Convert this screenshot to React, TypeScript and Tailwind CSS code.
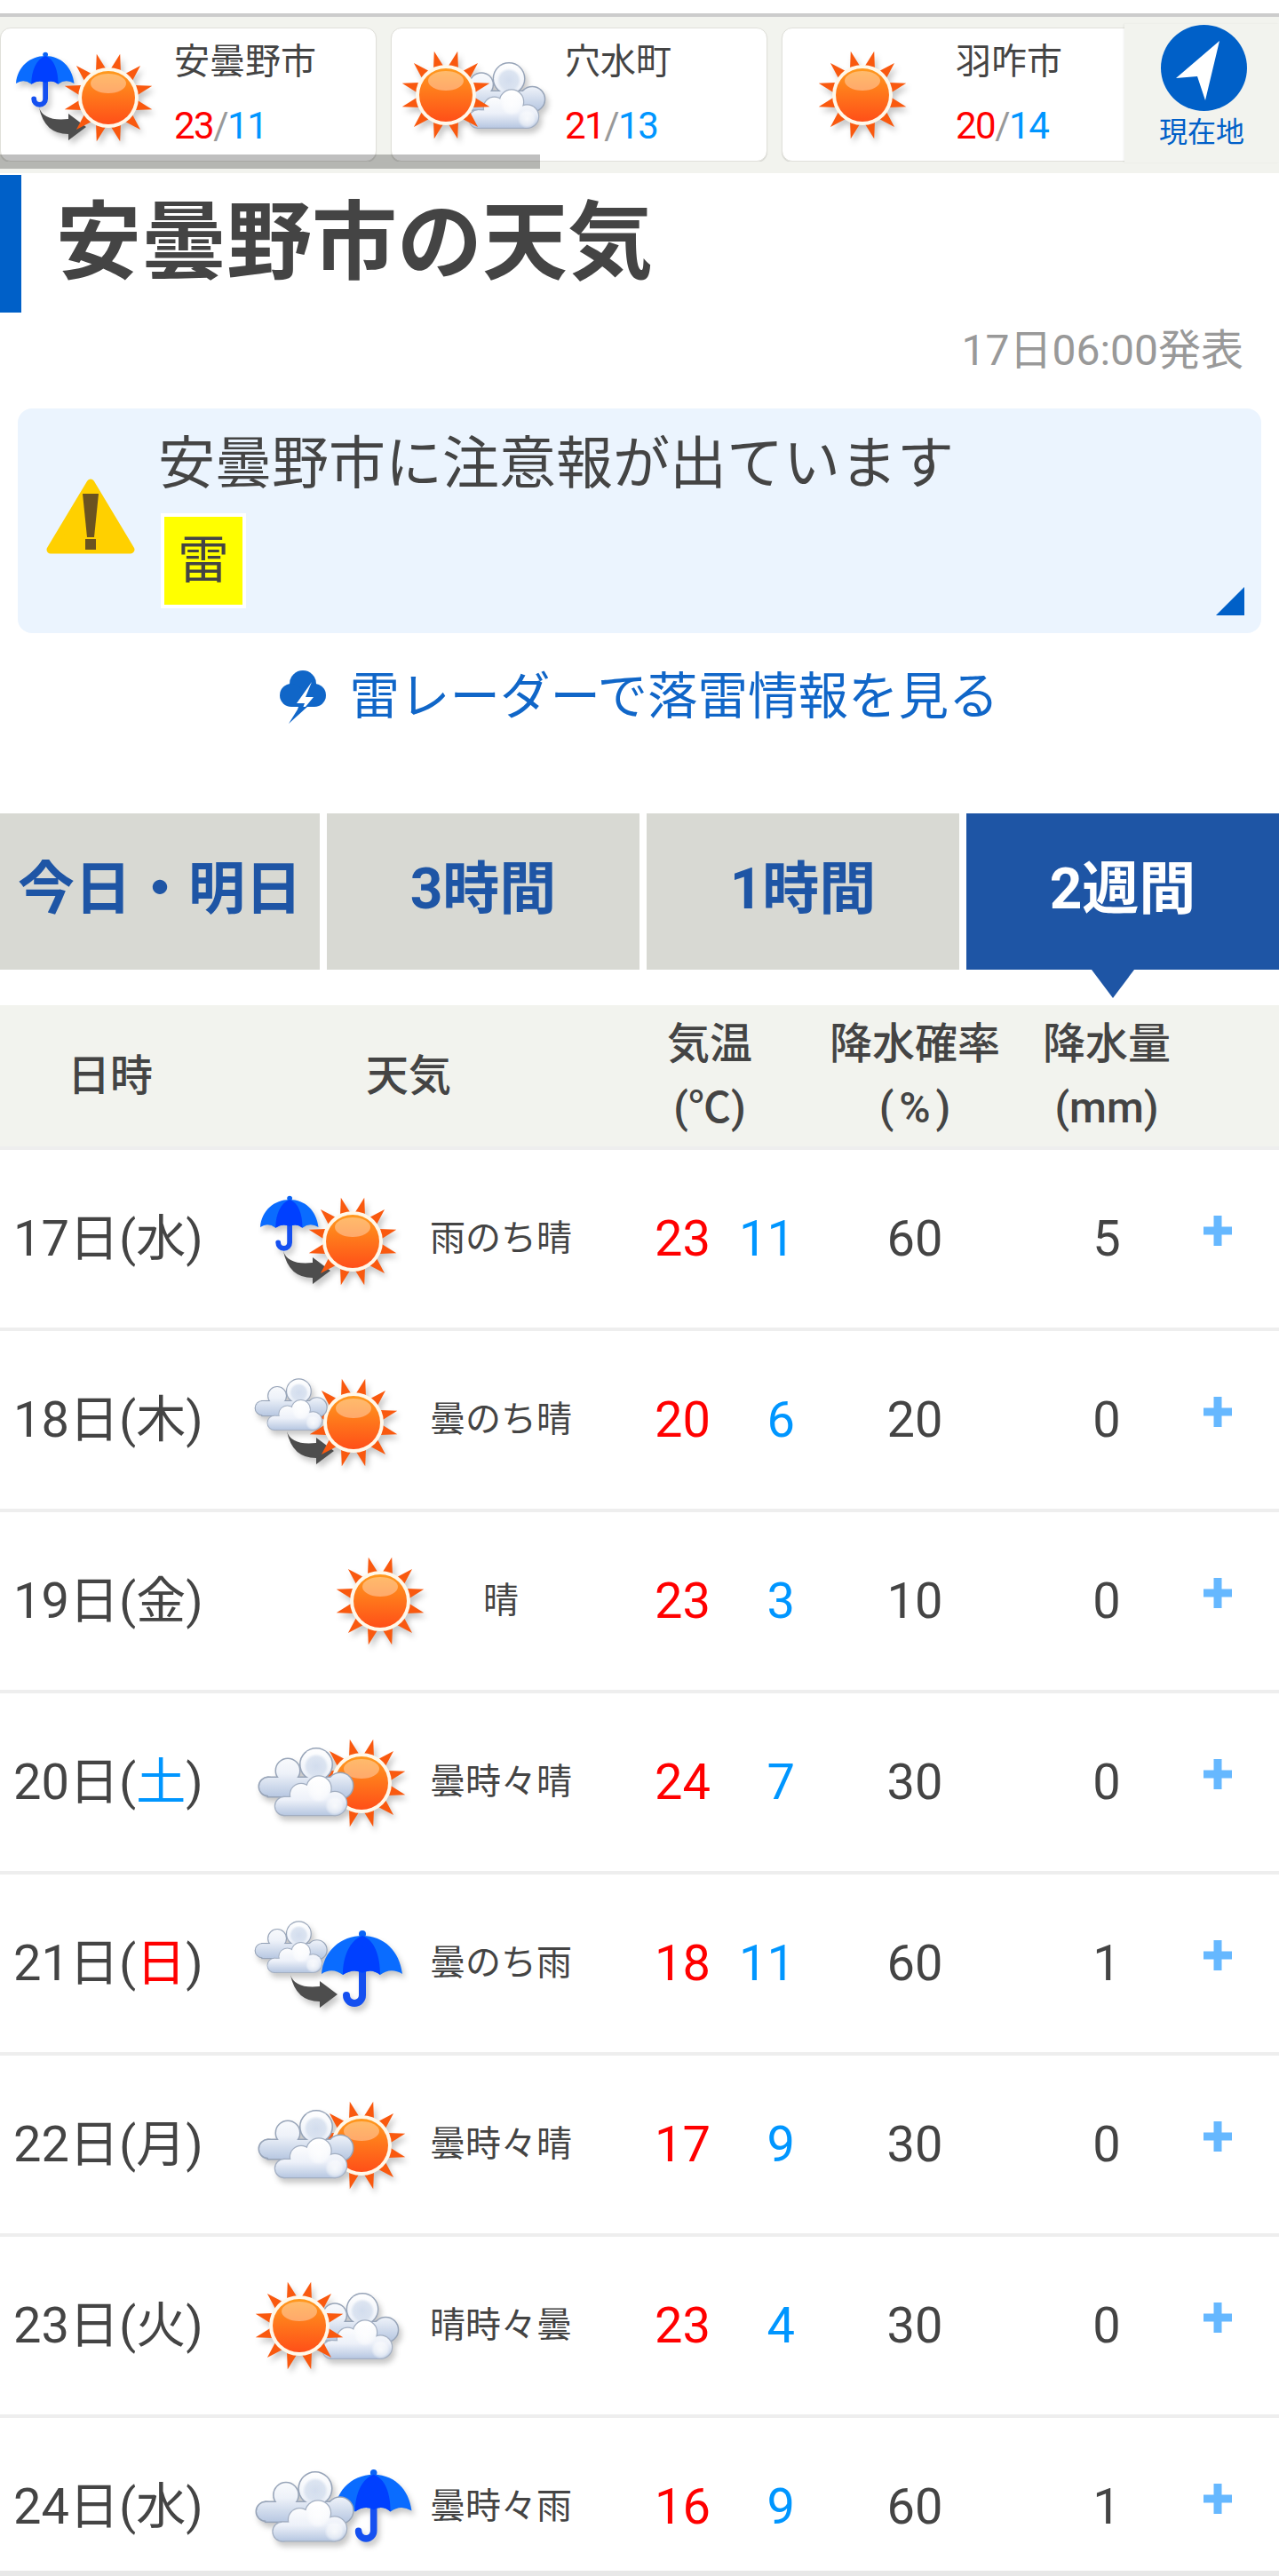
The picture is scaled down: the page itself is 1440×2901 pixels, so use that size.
type IconKind = 'rainThenSun' | 'cloudThenSun' | 'sun' | 'cloudSun' | 'cloudThenRain' | 'sunCloud' | 'cloudRain';

type Day = {
  date: string;
  dow: string;
  dowColor?: string;
  icon: IconKind;
  label: string;
  high: number;
  low: number;
  pop: number;
  rain: number;
};

const days: Day[] = [
  { date: '17日', dow: '水', icon: 'rainThenSun', label: '雨のち晴', high: 23, low: 11, pop: 60, rain: 5 },
  { date: '18日', dow: '木', icon: 'cloudThenSun', label: '曇のち晴', high: 20, low: 6, pop: 20, rain: 0 },
  { date: '19日', dow: '金', icon: 'sun', label: '晴', high: 23, low: 3, pop: 10, rain: 0 },
  { date: '20日', dow: '土', dowColor: 'text-[#0096ff]', icon: 'cloudSun', label: '曇時々晴', high: 24, low: 7, pop: 30, rain: 0 },
  { date: '21日', dow: '日', dowColor: 'text-[#ff0000]', icon: 'cloudThenRain', label: '曇のち雨', high: 18, low: 11, pop: 60, rain: 1 },
  { date: '22日', dow: '月', icon: 'cloudSun', label: '曇時々晴', high: 17, low: 9, pop: 30, rain: 0 },
  { date: '23日', dow: '火', icon: 'sunCloud', label: '晴時々曇', high: 23, low: 4, pop: 30, rain: 0 },
  { date: '24日', dow: '水', icon: 'cloudRain', label: '曇時々雨', high: 16, low: 9, pop: 60, rain: 1 },
];

const cards: { name: string; icon: IconKind; high: number; low: number }[] = [
  { name: '安曇野市', icon: 'rainThenSun', high: 23, low: 11 },
  { name: '穴水町', icon: 'sunCloud', high: 21, low: 13 },
  { name: '羽咋市', icon: 'sun', high: 20, low: 14 },
];

// Shared gradients, referenced by every weather icon
function IconDefs() {
  return (
    <svg className="absolute w-0 h-0" aria-hidden="true">
      <defs>
        <linearGradient id="sunCore" x1="0" y1="0" x2="0" y2="1">
          <stop offset="0%" stopColor="#ff9a1e" />
          <stop offset="100%" stopColor="#ff4f18" />
        </linearGradient>
        <linearGradient id="cloudBack" gradientUnits="userSpaceOnUse" x1="0" y1="0" x2="0" y2="56">
          <stop offset="0%" stopColor="#ffffff" />
          <stop offset="50%" stopColor="#eef2f9" />
          <stop offset="100%" stopColor="#b4c5e0" />
        </linearGradient>
        <linearGradient id="cloudFront" gradientUnits="userSpaceOnUse" x1="0" y1="36" x2="0" y2="76">
          <stop offset="0%" stopColor="#ffffff" />
          <stop offset="55%" stopColor="#edf1f9" />
          <stop offset="100%" stopColor="#b4c5e0" />
        </linearGradient>
        <radialGradient id="softGlow">
          <stop offset="0%" stopColor="#ffffff" stopOpacity="0.8" />
          <stop offset="70%" stopColor="#ffffff" stopOpacity="0.5" />
          <stop offset="100%" stopColor="#ffffff" stopOpacity="0" />
        </radialGradient>
        <radialGradient id="softBlue">
          <stop offset="0%" stopColor="#cfdaec" stopOpacity="0.9" />
          <stop offset="75%" stopColor="#d5dfee" stopOpacity="0.8" />
          <stop offset="100%" stopColor="#d5dfee" stopOpacity="0" />
        </radialGradient>
      </defs>
    </svg>
  );
}

function Sun({ x, y }: { x: number; y: number }) {
  const rays = Array.from({ length: 12 }, (_, i) => {
    const a = ((15 + i * 30) * Math.PI) / 180;
    const d = (10 * Math.PI) / 180;
    const pt = (r: number, ang: number) => `${x + r * Math.sin(ang)},${y - r * Math.cos(ang)}`;
    return `${pt(33, a - d)} ${pt(51, a)} ${pt(33, a + d)}`;
  });
  return (
    <g>
      {rays.map((p) => (
        <polygon key={p} points={p} fill="#f9590f" />
      ))}
      <circle cx={x} cy={y} r={34} fill="#fff8ea" />
      <circle cx={x} cy={y} r={30} fill="url(#sunCore)" />
      <ellipse cx={x} cy={y - 16} rx={20} ry={11} fill="#ffffff" opacity={0.35} />
    </g>
  );
}

function BackShapes(props: { fill?: string; stroke?: string; strokeWidth?: number }) {
  return (
    <g {...props}>
      <circle cx={11} cy={43} r={10} />
      <circle cx={33} cy={25} r={13} />
      <circle cx={65} cy={18} r={17.5} />
      <circle cx={92} cy={42} r={14} />
      <rect x={11} y={33} width={82} height={21} />
    </g>
  );
}

function FrontShapes(props: { fill?: string; stroke?: string; strokeWidth?: number }) {
  return (
    <g {...props}>
      <circle cx={29} cy={65} r={10} />
      <circle cx={48} cy={52} r={12} />
      <circle cx={68} cy={45} r={13.5} />
      <circle cx={86} cy={62} r={13} />
      <rect x={29} y={55} width={57} height={20} />
    </g>
  );
}

function Cloud({ x, y, s = 1 }: { x: number; y: number; s?: number }) {
  return (
    <g transform={`translate(${x} ${y}) scale(${s})`}>
      <BackShapes fill="#97a4b8" stroke="#97a4b8" strokeWidth={3} />
      <BackShapes fill="url(#cloudBack)" />
      <circle cx={65} cy={20} r={14} fill="url(#softBlue)" />
      <FrontShapes fill="#a3afc2" stroke="#a3afc2" strokeWidth={2.500} />
      <FrontShapes fill="url(#cloudFront)" />
      <circle cx={68} cy={48} r={13} fill="url(#softGlow)" />
      <circle cx={86} cy={65} r={11} fill="url(#softGlow)" />
    </g>
  );
}

function Umbrella({ x, y, s = 1 }: { x: number; y: number; s?: number }) {
  return (
    <g transform={`translate(${x} ${y}) scale(${s})`}>
      <path d="M46 46 V74 A9 9 0 0 1 28 74" fill="none" stroke="#1550f0" strokeWidth={8} strokeLinecap="round" />
      <circle cx={46} cy={5} r={4} fill="#0a63f5" />
      <path d="M0 50 C2 24 22 7 46 7 C70 7 88 24 91 50 Q78 42 66 51 Q56 43 46 49 Q36 43 24 51 Q12 42 0 50 Z" fill="#0a6cff" />
      <path d="M46 7 C32 12 24 30 24 51 Q36 43 46 49 Q56 43 66 51 C66 30 60 12 46 7 Z" fill="#0040ff" />
    </g>
  );
}

function TurnArrow({ x, y }: { x: number; y: number }) {
  return (
    <path
      transform={`translate(${x} ${y})`}
      d="M0 0 Q5 16 33 13 L33 7 L53 22 L33 37 L33 30 Q6 30 0 0 Z"
      fill="#4d4d4d"
    />
  );
}

function WeatherIcon({ kind, className }: { kind: IconKind; className: string }) {
  return (
    <svg
      viewBox="0 0 160 110"
      className={`overflow-visible shrink-0 drop-shadow-[3px_5px_3px_rgba(0,0,0,0.22)] ${className}`}
    >
      {kind === 'rainThenSun' && (
        <>
          <TurnArrow x={29} y={69} />
          <Sun x={107} y={58} />
          <Umbrella x={3} y={6} s={0.72} />
        </>
      )}
      {kind === 'cloudThenSun' && (
        <>
          <TurnArrow x={33} y={68} />
          <Sun x={108} y={58} />
          <Cloud x={-3} y={9} s={0.76} />
        </>
      )}
      {kind === 'sun' && <Sun x={80} y={55} />}
      {kind === 'cloudSun' && (
        <>
          <Sun x={117} y={56} />
          <Cloud x={1} y={17} />
        </>
      )}
      {kind === 'cloudThenRain' && (
        <>
          <TurnArrow x={37} y={68} />
          <Umbrella x={72} y={17} />
          <Cloud x={-3} y={8} s={0.76} />
        </>
      )}
      {kind === 'sunCloud' && (
        <>
          <Cloud x={55} y={19} s={0.97} />
          <Sun x={47} y={55} />
        </>
      )}
      {kind === 'cloudRain' && (
        <>
          <Umbrella x={87} y={12} s={0.95} />
          <Cloud x={-2} y={16} s={1.03} />
        </>
      )}
    </svg>
  );
}

function LocationCard({ name, icon, high, low }: { name: string; icon: IconKind; high: number; low: number }) {
  return (
    <div className="flex items-center w-[424px] h-[151px] shrink-0 bg-white rounded-xl border border-[#e0e0da] shadow-[0_1px_1px_rgba(0,0,0,0.12)]">
      <WeatherIcon kind={icon} className={icon === 'sun' ? 'w-[160px] h-[110px] ml-[10px]' : 'w-[160px] h-[110px] ml-[14px]'} />
      <div className={icon === 'sun' ? 'ml-[25px] flex flex-col pb-[4px]' : 'ml-[21px] flex flex-col pb-[4px]'}>
        <div className="text-[40px] leading-[73px] text-[#444]">{name}</div>
        <div className="text-[42px] leading-[71px] tracking-[-1.5px] text-[#999]">
          <span className="text-[#ff0000]">{high}</span>/<span className="text-[#0096ff]">{low}</span>
        </div>
      </div>
    </div>
  );
}

function DayRow({ day, last }: { day: Day; last: boolean }) {
  return (
    <div className={last ? 'h-[178px] border-b-[6px] border-[#e8e8e8] overflow-hidden' : 'h-[204px] border-b-4 border-[#eeeeee] overflow-hidden'}>
      <div className="flex items-center h-[200px] text-[56px] text-[#444]">
        <div className="w-[290px] pl-[15px]">
          {day.date}(<span className={day.dowColor}>{day.dow}</span>)
        </div>
        <div className="w-[160px]">
          <WeatherIcon kind={day.icon} className={day.icon === 'sun' ? 'w-[160px] h-[110px] ml-[58px]' : 'w-[160px] h-[110px]'} />
        </div>
        <div className="w-[228px] text-center text-[40px]">{day.label}</div>
        <div className="w-[122px] text-right text-[#ff0000]">{day.high}</div>
        <div className="w-[95px] text-right text-[#0096ff]">{day.low}</div>
        <div className="w-[270px] text-center">{day.pop}</div>
        <div className="w-[162px] text-center">{day.rain}</div>
        <svg viewBox="0 0 32 34" className="ml-[28px] mb-[18px] w-[32px] h-[34px]">
          <path d="M11.5 0h9v12.5H32v9H20.500V34h-9V21.500H0v-9h11.500z" fill="#66b8ff" />
        </svg>
      </div>
    </div>
  );
}

export default function App() {
  return (
    <div className="relative w-[1440px] h-[2901px] overflow-hidden bg-white pt-[15px] [font-family:Roboto,'Noto_Sans_CJK_JP',sans-serif]">
      <IconDefs />

      {/* Location strip */}
      <div className="relative h-[180px] border-t-4 border-[#cccccc] bg-[#f2f3ee] pt-[12px]">
        <div className="flex gap-4 overflow-hidden">
          {cards.map((c) => (
            <LocationCard key={c.name} {...c} />
          ))}
        </div>
        <div className="absolute right-0 top-[8px] w-[174px] h-[156px] bg-[#f2f3ee] shadow-[-1px_0_2px_rgba(0,0,0,0.06)] flex flex-col items-center">
          <svg viewBox="0 0 97 97" className="w-[97px] h-[97px] mt-[1px] ml-[5px]">
            <circle cx="48.500" cy="48.500" r="48.500" fill="#0060c8" />
            <path d="M66 18 L17 60 L41 58 L50 85 Z" fill="#ffffff" />
          </svg>
          <div className="text-[32px] leading-[40px] text-[#0060c8] mt-[4px]">現在地</div>
        </div>
        <div className="absolute left-0 top-[155px] w-[608px] h-[16px] bg-black/25" />
      </div>

      {/* Title */}
      <div className="mt-[2px] h-[155px] border-l-[24px] border-[#0060c8] pl-[39px] pb-[4px] flex items-center">
        <h1 className="text-[96px] font-bold text-[#444]">安曇野市の天気</h1>
      </div>
      <div className="h-[84px] pt-[2px] flex items-center justify-end pr-[40px] text-[48px] text-[#999]">17日06:00発表</div>

      {/* Warning */}
      <div className="relative mt-[24px] mx-[20px] h-[253px] rounded-2xl bg-[#ebf4fe] flex items-center">
        <svg viewBox="0 0 100 85" className="w-[100px] h-[85px] ml-[32px] mb-[10px] shrink-0">
          <path d="M50 5 L95 80 H5 Z" fill="#ffd000" stroke="#ffd000" strokeWidth="9" strokeLinejoin="round" />
          <path d="M41 17 H59 L54 66 H46 Z" fill="#6b5320" />
          <rect x="44" y="68" width="12" height="12" fill="#6b5320" />
        </svg>
        <div className="ml-[26px] self-start pt-[31px] flex flex-col">
          <div className="text-[64px] leading-[64px] text-[#444]">安曇野市に注意報が出ています</div>
          <div className="mt-[23px] ml-[3px] w-[96px] h-[107px] border-4 border-white bg-[#ffff00] flex items-center justify-center text-[58px] text-[#444]">雷</div>
        </div>
        <div className="absolute right-[19px] bottom-[20px] w-0 h-0 border-l-[32px] border-b-[32px] border-l-transparent border-b-[#0060c8]" />
      </div>

      {/* Radar link */}
      <div className="mt-[42px] flex justify-center items-center gap-[26px] text-[56.5px] leading-[56px] text-[#1066c8]">
        <svg viewBox="0 0 52 60" className="w-[52px] h-[60px] shrink-0">
          <circle cx="26" cy="15" r="15" fill="#1066c8" />
          <circle cx="13" cy="28" r="13" fill="#1066c8" />
          <circle cx="39" cy="28" r="13" fill="#1066c8" />
          <rect x="13" y="20" width="26" height="21" fill="#1066c8" />
          <path d="M36 13 L19 37 H28 L24 47 L38 30 H29 Z" fill="#ffffff" />
          <path d="M21 41 H31 L10 60 L20 44 Z" fill="#1066c8" />
        </svg>
        <span>雷レーダーで落雷情報を見る</span>
      </div>

      {/* Tabs */}
      <div className="relative mt-[101px] flex h-[176px] text-[64px] font-bold text-[#1e55a5]">
        <div className="w-[360px] bg-[#d8d9d3] flex items-center justify-center pb-1">今日・明日</div>
        <div className="w-[352px] ml-2 bg-[#d8d9d3] flex items-center justify-center pb-1">3時間</div>
        <div className="w-[352px] ml-2 bg-[#d8d9d3] flex items-center justify-center pb-1">1時間</div>
        <div className="relative w-[352px] ml-2 bg-[#1e55a5] text-white flex items-center justify-center pb-1">
          2週間
          <div className="absolute top-full left-[141px] w-0 h-0 border-x-[24px] border-t-[32px] border-x-transparent border-t-[#1e55a5]" />
        </div>
      </div>

      {/* Table header */}
      <div className="mt-[40px] h-[163px] border-b-4 border-[#eeeeee] bg-[#f2f3ee] flex items-center text-center text-[48px] leading-[72px] font-medium text-[#444]">
        <div className="w-[248px]">日時</div>
        <div className="w-[424px]">天気</div>
        <div className="w-[254px]">気温<br />(℃)</div>
        <div className="w-[208px]">降水確率<br />(<span className="mx-[6px]">%</span>)</div>
        <div className="w-[224px]">降水量<br />(mm)</div>
      </div>

      {days.map((d, i) => (
        <DayRow key={d.date} day={d} last={i === days.length - 1} />
      ))}
    </div>
  );
}
